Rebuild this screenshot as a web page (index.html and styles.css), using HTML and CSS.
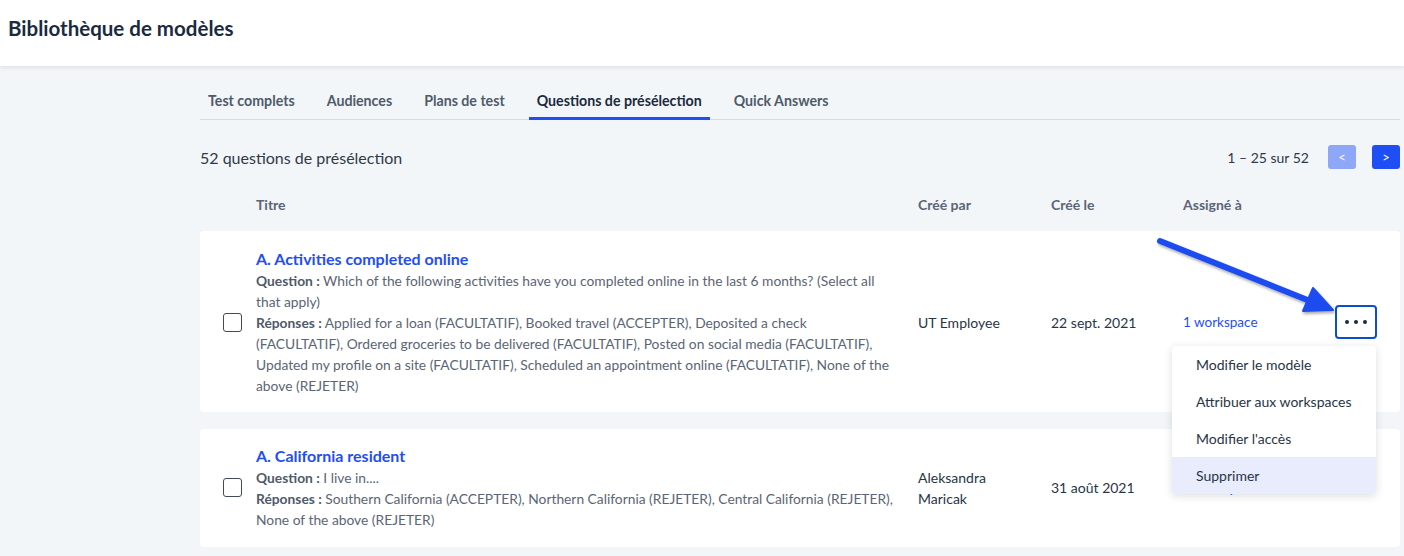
FILE: index.html
```html
<!DOCTYPE html>
<html lang="fr">
<head>
    <meta charset="UTF-8">
    <meta name="viewport" content="width=device-width, initial-scale=1.0">
    <title>Bibliothèque de modèles</title>
    <link rel="stylesheet" href="styles.css">
</head>
<body>
    <header class="topbar">
        <h1>Bibliothèque de modèles</h1>
    </header>

    <main class="library">
        <nav class="tabs">
            <a class="tab">Test complets</a>
            <a class="tab">Audiences</a>
            <a class="tab">Plans de test</a>
            <a class="tab active">Questions de présélection</a>
            <a class="tab">Quick Answers</a>
        </nav>

        <div class="toolbar">
            <span class="count">52 questions de présélection</span>
            <div class="pager">
                <span>1 – 25 sur 52</span>
                <button class="page-btn disabled">&lt;</button>
                <button class="page-btn">&gt;</button>
            </div>
        </div>

        <div class="row head">
            <div></div>
            <div>Titre</div>
            <div>Créé par</div>
            <div>Créé le</div>
            <div>Assigné à</div>
            <div></div>
        </div>

        <div class="row card">
            <div class="check"><span class="box"></span></div>
            <div class="info">
                <a class="title">A. Activities completed online</a>
                <p><b>Question :</b> Which of the following activities have you completed online in the last 6 months? (Select all that apply)</p>
                <p><b>Réponses :</b> Applied for a loan (FACULTATIF), Booked travel (ACCEPTER), Deposited a check (FACULTATIF), Ordered groceries to be delivered (FACULTATIF), Posted on social media (FACULTATIF), Updated my profile on a site (FACULTATIF), Scheduled an appointment online (FACULTATIF), None of the above (REJETER)</p>
            </div>
            <div class="cell">UT Employee</div>
            <div class="cell">22 sept. 2021</div>
            <div class="cell"><a class="link">1 workspace</a></div>
            <div class="actions">
                <button class="dots"><i></i><i></i><i></i></button>
                <ul class="menu">
                    <li>Modifier le modèle</li>
                    <li>Attribuer aux workspaces</li>
                    <li>Modifier l'accès</li>
                    <li class="hover">Supprimer</li>
                </ul>
            </div>
        </div>

        <div class="row card">
            <div class="check"><span class="box"></span></div>
            <div class="info">
                <a class="title">A. California resident</a>
                <p><b>Question :</b> I live in....</p>
                <p><b>Réponses :</b> Southern California (ACCEPTER), Northern California (REJETER), Central California (REJETER), None of the above (REJETER)</p>
            </div>
            <div class="cell">Aleksandra<br>Maricak</div>
            <div class="cell">31 août 2021</div>
            <div class="cell"><a class="link">1 workspace</a></div>
            <div class="actions"></div>
        </div>
    </main>

    <!-- annotation arrow pointing at the row menu -->
    <svg class="arrow" viewBox="0 0 190 90" width="190" height="90">
        <defs>
            <filter id="shadow" x="-20%" y="-20%" width="140%" height="160%">
                <feDropShadow dx="1" dy="2" stdDeviation="1.5" flood-color="#000" flood-opacity="0.35"/>
            </filter>
        </defs>
        <g filter="url(#shadow)" fill="#1f4cf0" stroke="#1f4cf0">
            <line x1="10" y1="11" x2="160" y2="71" stroke-width="6" stroke-linecap="round"/>
            <polygon points="153,81 163,58 183,80" stroke-width="2" stroke-linejoin="round"/>
        </g>
    </svg>
</body>
</html>
```

FILE: styles.css
```css
body {
    margin: 0;
    font-family: Lato, "Liberation Sans", sans-serif;
    background: #f3f6f8;
    color: #283546;
}

.topbar {
    height: 66px;
    background: #fff;
    box-shadow: 0 2px 4px rgba(0, 0, 0, 0.08);
    display: flex;
    align-items: center;
    padding: 0 8px;
}

.topbar h1 {
    margin: 0 0 10px;
    font-size: 20.5px;
    font-weight: 700;
    color: #1b2a3f;
}

.library {
    padding: 20px 4px 0 200px;
}

.tabs {
    display: flex;
    gap: 16px;
    border-bottom: 1px solid #d8dde3;
}

.tab {
    padding: 6px 8px 8px;
    font-size: 14.2px;
    font-weight: 700;
    color: #4f5b6b;
    border-bottom: 3px solid transparent;
    margin-bottom: -1px;
}

.tab.active {
    color: #1b2a3f;
    border-bottom-color: #1f4ef5;
}

.toolbar {
    display: flex;
    justify-content: space-between;
    align-items: center;
    margin-top: 25px;
    height: 24px;
}

.count {
    font-size: 16px;
    color: #2f3a48;
}

.pager {
    display: flex;
    align-items: center;
    gap: 16px;
    font-size: 14px;
    color: #2f3a48;
}

.pager span {
    margin-right: 3px;
}

.page-btn {
    width: 28px;
    height: 24px;
    border: none;
    border-radius: 3px;
    background: #1f4ef5;
    color: #fff;
    font-size: 13px;
    font-family: inherit;
    padding: 0;
}

.page-btn.disabled {
    background: #8ea7f7;
}

.row {
    display: grid;
    grid-template-columns: 56px 662px 133px 132px 1fr 66px;
    align-items: center;
}

.row.head {
    margin-top: 19px;
    height: 32px;
    font-size: 14px;
    font-weight: 700;
    color: #5a6577;
}

.card {
    background: #fff;
    border-radius: 4px;
    margin-top: 11px;
    padding: 17px 0 16px;
    position: relative;
}

.card + .card {
    margin-top: 17px;
    padding: 16px 0 17px;
}

.check {
    padding-left: 23px;
    display: flex;
}

.box {
    width: 17px;
    height: 17px;
    border: 1.5px solid #3f4a5a;
    border-radius: 3px;
}

.info {
    padding-right: 22px;
}

.title {
    display: block;
    font-size: 16px;
    font-weight: 700;
    line-height: 22px;
    color: #1f4ef5;
}

.info p {
    margin: 0;
    font-size: 13.8px;
    line-height: 21px;
    color: #5b6575;
}

.info b {
    color: #4f5a6a;
}

.cell {
    font-size: 14px;
    line-height: 21px;
    color: #283546;
}

.link {
    font-size: 13.5px;
    color: #1f4ef5;
}

.actions {
    position: relative;
    display: flex;
    justify-content: flex-end;
    padding-right: 23px;
}

.dots {
    width: 42px;
    height: 34px;
    border: 2px solid #0b4fcc;
    border-radius: 4px;
    background: #fff;
    display: flex;
    align-items: center;
    justify-content: center;
    gap: 5px;
    padding: 0;
}

.dots i {
    width: 4px;
    height: 4px;
    border-radius: 50%;
    background: #1b2a3f;
}

.menu {
    position: absolute;
    top: 41px;
    right: 24px;
    width: 204px;
    margin: 0;
    padding: 0;
    list-style: none;
    background: #fff;
    border-radius: 4px;
    box-shadow: 0 2px 8px rgba(20, 30, 50, 0.15);
    z-index: 2;
    overflow: hidden;
}

.menu li {
    height: 37px;
    line-height: 37px;
    padding: 0 24px;
    font-size: 14px;
    color: #283546;
}

.menu li.hover {
    background: #e8ecfd;
}

.arrow {
    position: absolute;
    left: 1150px;
    top: 230px;
    z-index: 3;
}
```
